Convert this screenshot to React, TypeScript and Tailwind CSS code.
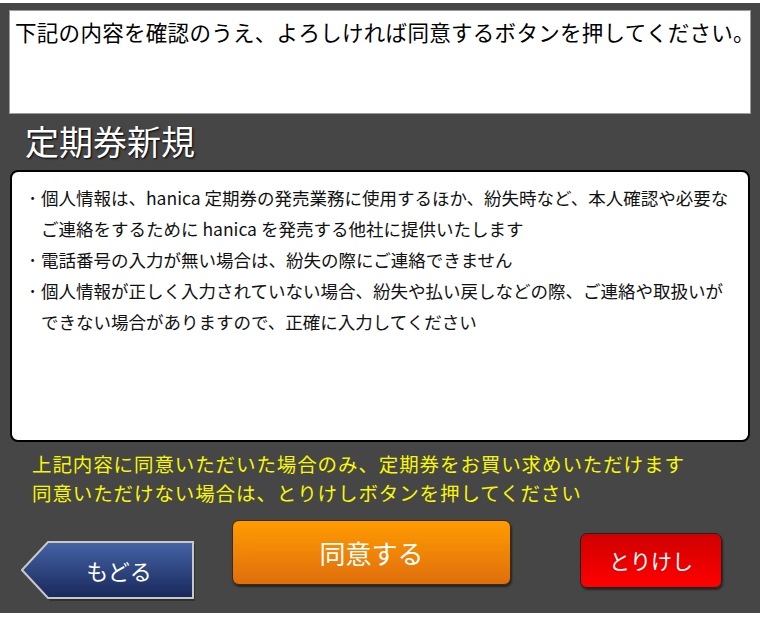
import React from 'react';

const jp = { fontFamily: '"Noto Sans CJK JP", "Noto Sans", sans-serif' };

const notes: { text: string; bullet: boolean }[] = [
  { text: '個人情報は、hanica 定期券の発売業務に使用するほか、紛失時など、本人確認や必要な', bullet: true },
  { text: 'ご連絡をするために hanica を発売する他社に提供いたします', bullet: false },
  { text: '電話番号の入力が無い場合は、紛失の際にご連絡できません', bullet: true },
  { text: '個人情報が正しく入力されていない場合、紛失や払い戻しなどの際、ご連絡や取扱いが', bullet: true },
  { text: 'できない場合がありますので、正確に入力してください', bullet: false },
];

// left-pointing arrow button
const BackButton: React.FC = () => (
  <button className="relative w-[176px] h-[62px] flex items-center justify-center">
    <svg className="absolute inset-0" width="176" height="62" viewBox="0 0 176 62">
      <defs>
        <linearGradient id="backGrad" x1="0" y1="0" x2="0" y2="1">
          <stop offset="0" stopColor="#4563a6" />
          <stop offset="1" stopColor="#18285a" />
        </linearGradient>
      </defs>
      <polygon points="29,4 174,4 174,61 29,61 3,32" fill="#222" opacity="0.6" />
      <polygon points="27,2 172,2 172,58 27,58 1,30" fill="url(#backGrad)" stroke="#c8c8c8" strokeWidth="2" />
    </svg>
    <span className="relative text-white text-[22px] pl-[20px] -mt-[2px]" style={jp}>もどる</span>
  </button>
);

export default function App() {
  return (
    <div className="w-[768px] h-[620px] bg-white" style={jp}>
      <div className="w-[760px] h-[610px] mt-[3px] bg-[#464646] flex flex-col">
        {/* message */}
        <div className="mx-[9px] mt-[7px] h-[104px] bg-white border border-[#9a9a9a] px-[5px] pt-[6px]">
          <p className="text-[21.5px] leading-[30px] text-black whitespace-nowrap tracking-[0.3px]">
            下記の内容を確認のうえ、よろしければ同意するボタンを押してください。
          </p>
        </div>

        {/* title */}
        <h1 className="h-[56px] pl-[25px] pt-[5px] text-[34px] leading-[44px] text-white [text-shadow:1px_1px_2px_#000]">
          定期券新規
        </h1>

        {/* notes */}
        <div className="mx-[10px] h-[272px] rounded-[8px] border-2 border-black bg-white pl-[12px] pt-[10px]">
          {notes.map((n, i) => (
            <div key={i} className="flex text-[17.5px] leading-[31px] text-[#111] whitespace-nowrap">
              <span className="w-[17px] shrink-0 text-center">{n.bullet ? '･' : ''}</span>
              <span>{n.text}</span>
            </div>
          ))}
        </div>

        {/* notice */}
        <div className="pl-[32px] pt-[8px] text-[19.5px] leading-[28.5px] text-[#f8f800] tracking-[0.9px]">
          <p>上記内容に同意いただいた場合のみ、定期券をお買い求めいただけます</p>
          <p>同意いただけない場合は、とりけしボタンを押してください</p>
        </div>

        {/* buttons */}
        <div className="flex items-start pl-[21px] pt-[8px]">
          <div className="mt-[25px]">
            <BackButton />
          </div>
          <button className="ml-[35px] mt-[5px] w-[279px] h-[65px] rounded-[7px] border border-[#3a2a10] bg-gradient-to-b from-[#ff9c00] to-[#e06e0c] text-white text-[26px] shadow-[1px_2px_2px_rgba(0,0,0,0.5)]">
            同意する
          </button>
          <button className="ml-[69px] mt-[18px] w-[142px] h-[55px] rounded-[7px] border border-[#222] bg-gradient-to-b from-[#cf0000] to-[#ff0000] text-white text-[21px] shadow-[1px_2px_2px_rgba(0,0,0,0.5)]">
            とりけし
          </button>
        </div>
      </div>
    </div>
  );
}
